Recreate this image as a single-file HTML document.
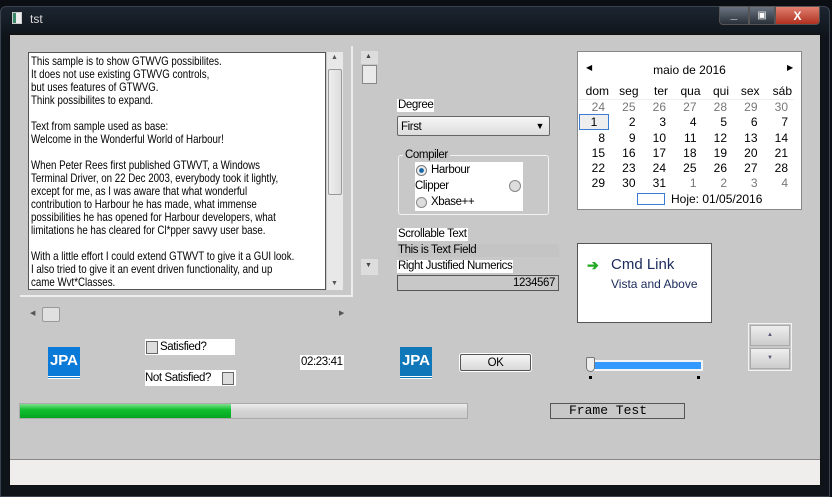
<!DOCTYPE html>
<html><head><meta charset="utf-8"><style>
*{margin:0;padding:0;box-sizing:border-box}
body{width:832px;height:497px;background:#0b0f14;position:relative;overflow:hidden;font-family:"Liberation Sans",sans-serif;font-size:12px;color:#000}
.a{position:absolute}
.t{font-size:11.5px;letter-spacing:-0.4px;line-height:13px;white-space:nowrap}
.w{background:#fff}
.cal td{width:30.5px;text-align:right;padding-right:6px;font-size:12px;height:15px}
.g{color:#777}
</style></head><body>
<div class="a" style="left:0;top:6px;width:830px;height:491px;background:linear-gradient(180deg,#1c2530 0,#0f141a 30px,#0f141a 100%);border:1px solid #3a4350;border-radius:6px 6px 0 0"></div>
<div class="a" style="left:12px;top:12px;width:10px;height:12px;background:linear-gradient(90deg,#3a8a6a 40%,#eee 40%);border:1px solid #ccc"></div>
<div class="a" style="left:30px;top:12px;color:#ddd;font-size:12px">tst</div>
<div class="a" style="left:719px;top:6px;width:30px;height:19px;background:linear-gradient(#6a7380,#2a313a);border:1px solid #555;border-radius:0 0 0 4px;color:#fff;text-align:center;font-weight:bold;line-height:15px">_</div>
<div class="a" style="left:749px;top:6px;width:26px;height:19px;background:linear-gradient(#6a7380,#2a313a);border:1px solid #555;color:#fff;text-align:center;line-height:17px;font-size:10px">▣</div>
<div class="a" style="left:775px;top:6px;width:45px;height:19px;background:linear-gradient(#e08070,#b03020);border:1px solid #555;border-radius:0 0 4px 0;color:#fff;text-align:center;font-weight:bold;line-height:18px">X</div>
<div class="a" style="left:9px;top:34px;width:812px;height:452px;background:#c8c8c8;border:1px solid #111"></div>
<div class="a" style="left:10px;top:459px;width:810px;height:26px;background:#f0eeec;border-top:1px solid #888"></div>
<div class="a" style="left:20px;top:46px;width:333px;height:251px;border-right:2px solid #eee;border-bottom:2px solid #eee"></div>
<div class="a w" style="left:28px;top:52px;width:298px;height:238px;border:1px solid #555;overflow:hidden">
<div style="position:absolute;left:2px;top:2px;font-size:12px;line-height:13px;white-space:nowrap;transform:scaleX(0.81);transform-origin:0 0">This sample is to show GTWVG possibilites.<br>It does not use existing GTWVG controls,<br>but uses features of GTWVG.<br>Think possibilites to expand.<br><br>Text from sample used as base:<br>Welcome in the Wonderful World of Harbour!<br><br>When Peter Rees first published GTWVT, a Windows<br>Terminal Driver, on 22 Dec 2003, everybody took it lightly,<br>except for me, as I was aware that what wonderful<br>contribution to Harbour he has made, what immense<br>possibilities he has opened for Harbour developers, what<br>limitations he has cleared for Cl*pper savvy user base.<br><br>With a little effort I could extend GTWVT to give it a GUI look.<br>I also tried to give it an event driven functionality, and up<br>came Wvt*Classes.</div></div>
<div class="a" style="left:327px;top:52px;width:16px;height:238px;background:#e8e8e8"></div>
<div class="a" style="left:328px;top:69px;width:14px;height:126px;background:linear-gradient(90deg,#eee,#ddd);border:1px solid #999;border-radius:2px"></div>
<div class="a" style="left:331px;top:54px;font-size:7px;color:#555">▲</div>
<div class="a" style="left:331px;top:280px;font-size:7px;color:#555">▼</div>
<div class="a" style="left:28px;top:307px;width:323px;height:15px;background:#c8c8c8"></div>
<div class="a" style="left:30px;top:309px;font-size:7px;color:#555">◀</div>
<div class="a" style="left:42px;top:307px;width:18px;height:15px;background:#e0e0e0;border:1px solid #999;border-radius:2px"></div>
<div class="a" style="left:339px;top:309px;font-size:7px;color:#555">▶</div>
<div class="a" style="left:361px;top:51px;width:17px;height:225px;background:#c8c8c8"></div>
<div class="a" style="left:361px;top:51px;width:17px;height:13px;background:#ddd"></div>
<div class="a" style="left:365px;top:53px;font-size:7px;color:#444">▲</div>
<div class="a" style="left:362px;top:65px;width:15px;height:19px;background:#eaeaea;border:1px solid #888"></div>
<div class="a" style="left:361px;top:259px;width:17px;height:16px;background:#ddd"></div>
<div class="a" style="left:365px;top:262px;font-size:7px;color:#444">▼</div>
<div class="a w t" style="left:397px;top:99px;padding:0 1px">Degree</div>
<div class="a t" style="left:397px;top:116px;width:153px;height:20px;border:1px solid #666;border-radius:2px;background:linear-gradient(#f6f6f6,#dcdcdc);padding:4px 3px">First<span style="position:absolute;right:5px;top:3px;font-size:9px">▼</span></div>
<div class="a" style="left:398px;top:155px;width:151px;height:60px;border:1px solid #f2f2f2;border-radius:3px"></div>
<div class="a t" style="left:403px;top:149px;background:#c8c8c8;padding:0 2px">Compiler</div>
<div class="a w" style="left:415px;top:162px;width:108px;height:49px"></div>
<div class="a" style="left:416px;top:165px;width:11px;height:11px;border-radius:50%;border:1px solid #777;background:radial-gradient(#1565a8 30%,#eee 45%)"></div>
<div class="a t" style="left:431px;top:164px">Harbour</div>
<div class="a t" style="left:415px;top:180px">Clipper</div>
<div class="a" style="left:509px;top:180px;width:12px;height:12px;border-radius:50%;border:1px solid #888;background:#ddd"></div>
<div class="a" style="left:416px;top:197px;width:11px;height:11px;border-radius:50%;border:1px solid #888;background:#ddd"></div>
<div class="a t" style="left:431px;top:196px">Xbase++</div>
<div class="a w t" style="left:397px;top:228px;padding:0 1px">Scrollable Text</div>
<div class="a t" style="left:397px;top:244px;width:162px;background:#c4c4c4;padding:0 1px">This is Text Field</div>
<div class="a w t" style="left:397px;top:260px;padding:0 1px">Right Justified Numerics</div>
<div class="a t" style="left:397px;top:275px;width:162px;height:16px;border:1px solid #555;text-align:right;padding:1px 3px">1234567</div>
<div class="a w" style="left:577px;top:51px;width:225px;height:159px;border:1px solid #888"></div>
<div class="a" style="left:586px;top:63px;font-size:8px">◀</div>
<div class="a" style="left:787px;top:63px;font-size:8px">▶</div>
<div class="a" style="left:577px;top:63px;width:225px;text-align:center;font-size:12px">maio de 2016</div>
<table class="a cal" style="left:579px;top:84px;border-collapse:collapse">
<tr style="border-bottom:1px solid #eee"><td style="padding-right:2px">dom</td><td style="padding-right:3px">seg</td><td style="padding-right:4px">ter</td><td style="padding-right:2px">qua</td><td style="padding-right:4px">qui</td><td style="padding-right:4px">sex</td><td style="padding-right:2px">sáb</td></tr>
<tr class="g"><td>24</td><td>25</td><td>26</td><td>27</td><td>28</td><td>29</td><td>30</td></tr>
<tr><td><span style="display:inline-block;width:30px;border:1px solid #3a7bd5;background:#eee;text-align:center;margin-right:-4px">1</span></td><td>2</td><td>3</td><td>4</td><td>5</td><td>6</td><td>7</td></tr>
<tr><td>8</td><td>9</td><td>10</td><td>11</td><td>12</td><td>13</td><td>14</td></tr>
<tr><td>15</td><td>16</td><td>17</td><td>18</td><td>19</td><td>20</td><td>21</td></tr>
<tr><td>22</td><td>23</td><td>24</td><td>25</td><td>26</td><td>27</td><td>28</td></tr>
<tr><td>29</td><td>30</td><td>31</td><td class="g">1</td><td class="g">2</td><td class="g">3</td><td class="g">4</td></tr>
</table>
<div class="a" style="left:637px;top:193px;width:28px;height:12px;border:1px solid #3a7bd5"></div>
<div class="a" style="left:671px;top:192px;font-size:12px">Hoje: 01/05/2016</div>
<div class="a w" style="left:577px;top:243px;width:135px;height:80px;border:1px solid #555"></div>
<div class="a" style="left:587px;top:257px;color:#2a2;font-size:14px;font-weight:bold">➔</div>
<div class="a" style="left:611px;top:256px;font-size:15px;color:#1a2a5a">Cmd Link</div>
<div class="a" style="left:611px;top:277px;font-size:12px;color:#1a2a5a">Vista and Above</div>
<div class="a" style="left:748px;top:323px;width:44px;height:48px;border:1px solid #f2f2f2"></div>
<div class="a" style="left:750px;top:325px;width:40px;height:21px;background:linear-gradient(#eee,#ccc);border:1px solid #aaa;text-align:center;font-size:6px;color:#557;line-height:18px">▲</div>
<div class="a" style="left:750px;top:348px;width:40px;height:21px;background:linear-gradient(#eee,#ccc);border:1px solid #aaa;text-align:center;font-size:6px;color:#557;line-height:18px">▼</div>
<div class="a" style="left:48px;top:347px;width:32px;height:32px;background:#0a7ad8;color:#fff;font-weight:bold;font-size:15px;text-align:center;line-height:28px;border-bottom:3px double #fff">JPA</div>
<div class="a" style="left:400px;top:347px;width:32px;height:32px;background:#1078b8;color:#fff;font-weight:bold;font-size:15px;text-align:center;line-height:28px;border-bottom:3px double #fff">JPA</div>
<div class="a w t" style="left:145px;top:339px;width:90px;height:16px;padding:2px 0 0 15px">Satisfied?</div>
<div class="a" style="left:146px;top:341px;width:12px;height:13px;border:1px solid #666;background:#ddd"></div>
<div class="a w t" style="left:145px;top:370px;width:91px;height:16px;padding:2px 0 0 0">Not Satisfied?</div>
<div class="a" style="left:222px;top:372px;width:12px;height:13px;border:1px solid #666;background:#ddd"></div>
<div class="a w t" style="left:300px;top:355px;padding:1px 1px">02:23:41</div>
<div class="a t" style="left:460px;top:354px;width:71px;height:17px;border:1px solid #555;border-radius:2px;background:linear-gradient(#f6f6f6,#d8d8d8);text-align:center;padding-top:2px;box-shadow:0 0 0 1px #fff">OK</div>
<div class="a" style="left:592px;top:360px;width:111px;height:11px;background:#f4f4f4"></div>
<div class="a" style="left:594px;top:362px;width:107px;height:7px;background:#3399ff"></div>
<div class="a" style="left:586px;top:357px;width:9px;height:15px;background:#eee;border:1px solid #777;border-radius:2px 2px 5px 5px"></div>
<div class="a" style="left:589px;top:376px;width:3px;height:3px;background:#000"></div>
<div class="a" style="left:697px;top:376px;width:3px;height:3px;background:#000"></div>
<div class="a" style="left:19px;top:403px;width:449px;height:16px;border:1px solid #aaa;background:linear-gradient(#eee,#d4d4d4 50%,#ccc)"></div>
<div class="a" style="left:20px;top:404px;width:211px;height:14px;background:linear-gradient(#7fe08f,#11c030 40%,#06a520);"></div>
<div class="a" style="left:550px;top:403px;width:135px;height:16px;border:1px solid #555;font-family:'Liberation Mono',monospace;font-size:13px;line-height:14px;padding-left:18px">Frame Test</div>
</body></html>
